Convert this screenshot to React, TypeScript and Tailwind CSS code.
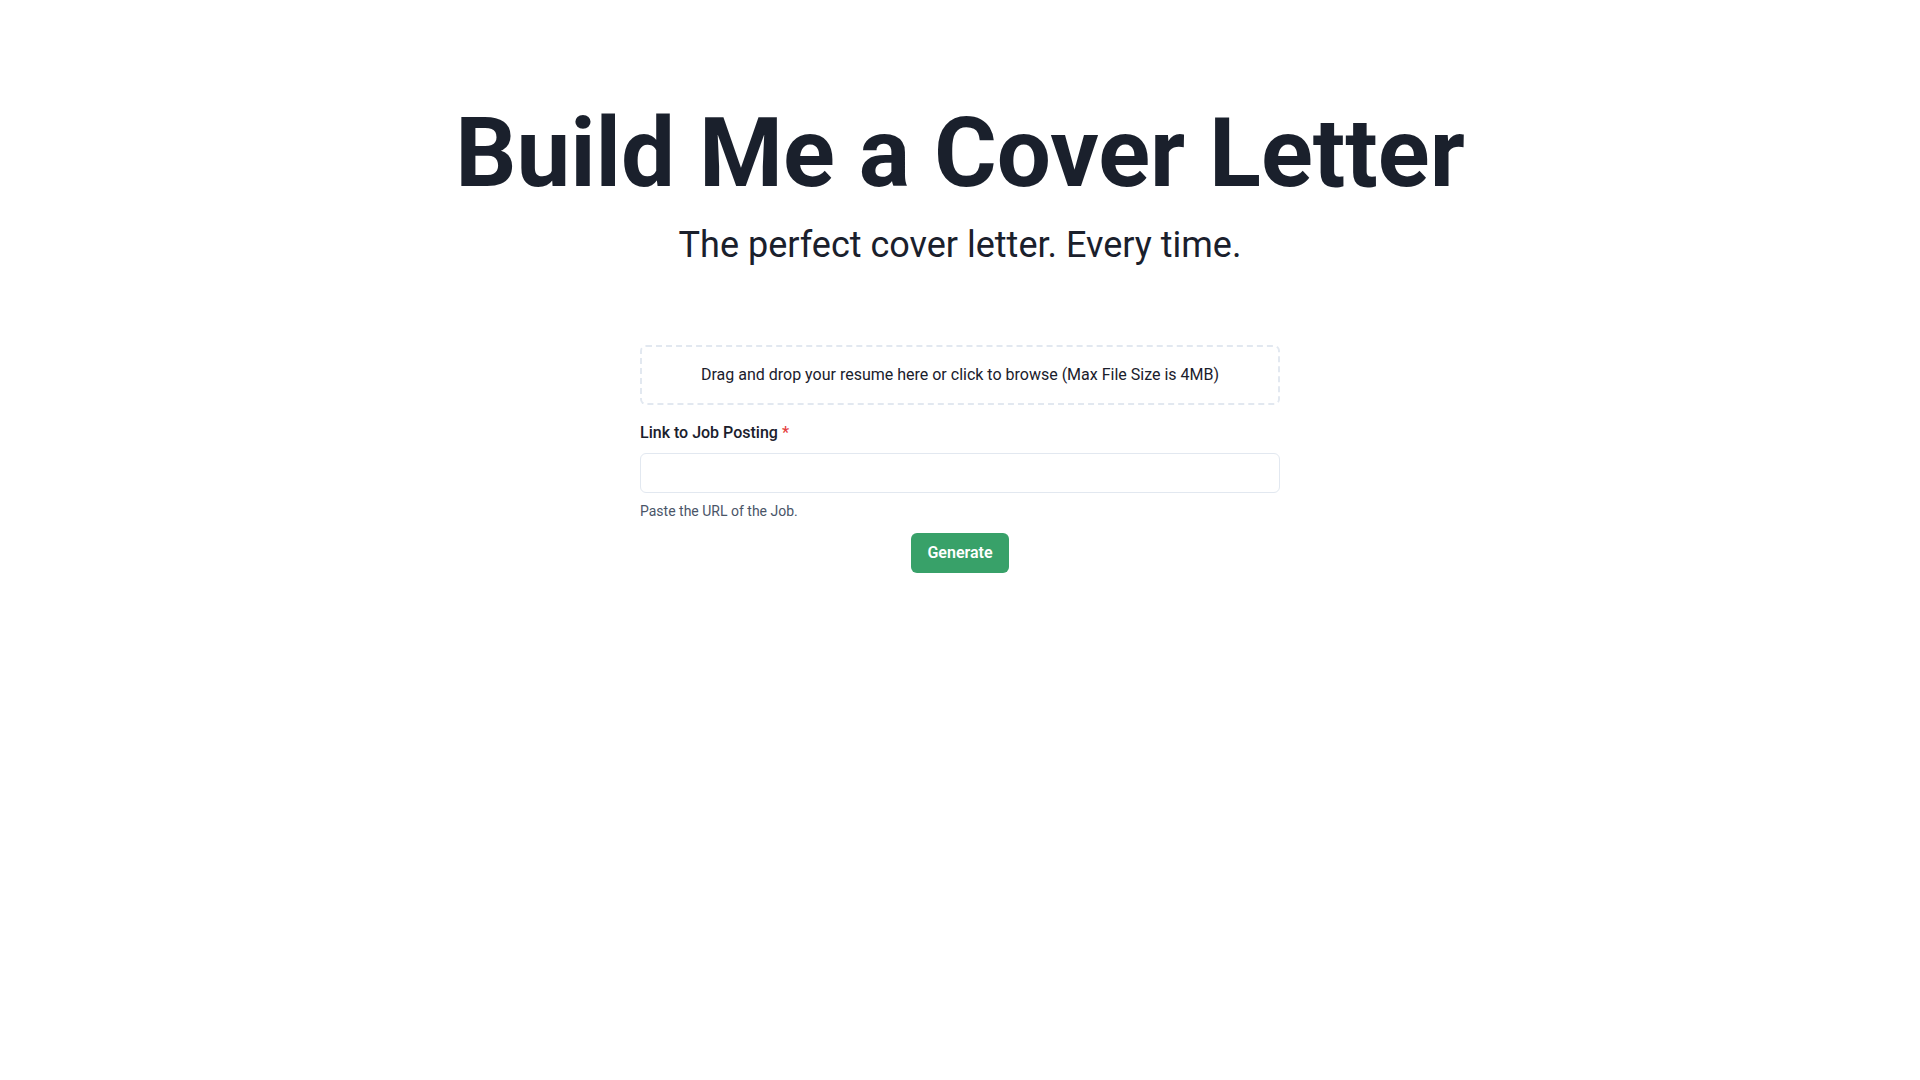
export default function App() {
  return (
    <div
      className="min-h-screen bg-white text-[#1a202c]"
      style={{ fontFamily: "Roboto, 'Liberation Sans', sans-serif" }}
    >
      <main className="flex flex-col items-center pt-[105px]">
        <h1 className="text-8xl font-bold leading-none tracking-normal text-[#1a202c]">
          Build Me a Cover Letter
        </h1>
        <p className="mt-6 text-4xl leading-10 text-[#1a202c]">
          The perfect cover letter. Every time.
        </p>

        <form className="mt-20 flex w-[640px] flex-col">
          <div className="cursor-pointer rounded-md border-2 border-dashed border-[#e2e8f0] p-4 text-center text-base leading-6 text-[#1a202c]">
            Drag and drop your resume here or click to browse (Max File Size is 4MB)
          </div>

          <label
            htmlFor="jobUrl"
            className="mt-4 mb-2 block text-base leading-6 font-medium text-[#1a202c]"
          >
            Link to Job Posting
            <span className="ml-1 text-[#e53e3e]">*</span>
          </label>
          <input
            id="jobUrl"
            type="url"
            required
            className="h-10 w-full rounded-md border border-[#e2e8f0] px-4 text-base outline-none"
          />
          <p className="mt-2 text-sm leading-5 text-[#4a5568]">
            Paste the URL of the Job.
          </p>

          <div className="mt-3 flex justify-center">
            <button
              type="submit"
              className="h-10 rounded-md bg-[#38a169] px-4 text-base font-semibold text-white"
            >
              Generate
            </button>
          </div>
        </form>
      </main>
    </div>
  );
}
